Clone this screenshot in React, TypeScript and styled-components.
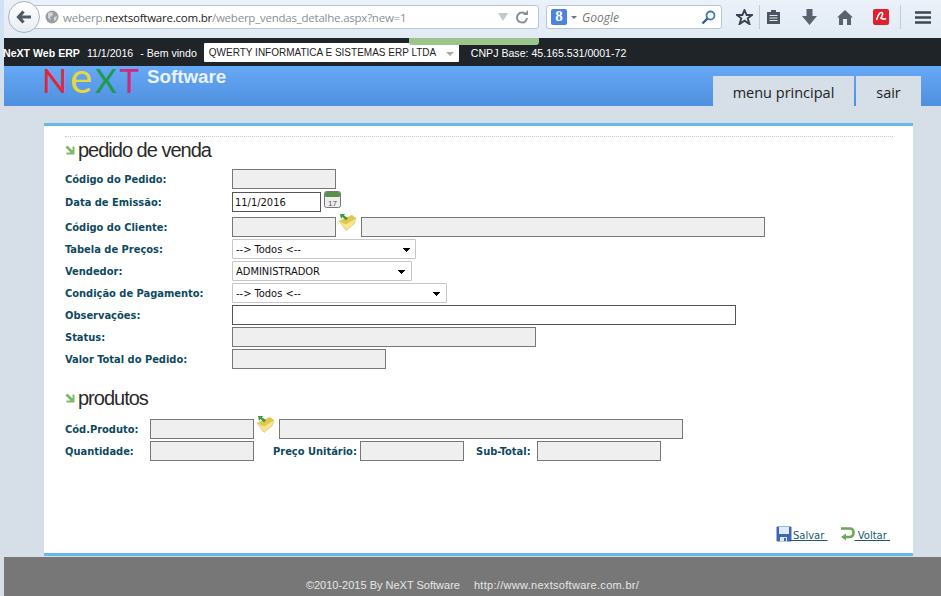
import React from 'react';
import styled, { createGlobalStyle } from 'styled-components';

const GlobalStyle = createGlobalStyle`
  html, body { margin: 0; padding: 0; height: 100%; overflow: hidden; }
  body { background: #d6dee8; font-family: "Liberation Sans", Arial, sans-serif; }
  * { box-sizing: border-box; }
`;

const FORM_FONT = '"DejaVu Sans Condensed", "DejaVu Sans", Verdana, sans-serif';

// --- browser chrome ---
const Screen = styled.div`
  width: 941px;
  height: 596px;
  display: flex;
  flex-direction: column;
  overflow: hidden;
  background: linear-gradient(#cfe3f6, #d6dee8 110px);
`;

const Toolbar = styled.div`
  height: 38px;
  flex: none;
  display: flex;
  align-items: center;
  margin-left: 4px;
  padding: 0 0 4px 4px;
  background: linear-gradient(#eaf1f9, #e2eaf4);
`;

const BackButton = styled.div`
  width: 32px;
  height: 32px;
  flex: none;
  border-radius: 50%;
  border: 1px solid #a9b3bf;
  background: linear-gradient(#ffffff, #e8edf3);
  display: flex;
  align-items: center;
  justify-content: center;
  position: relative;
  z-index: 1;
`;

const UrlBar = styled.div`
  width: 509px;
  height: 24px;
  margin-left: -10px;
  padding: 0 8px 0 14px;
  flex: none;
  display: flex;
  align-items: center;
  background: #fff;
  border: 1px solid #b9c5d3;
  border-radius: 0 3px 3px 0;
`;

const UrlText = styled.div`
  flex: 1;
  margin-left: 4px;
  font-family: "Open Sans", "Noto Sans", sans-serif;
  font-size: 11.5px;
  letter-spacing: -0.23px;
  color: #8a8f94;
  white-space: nowrap;
  b { font-weight: 400; color: #1c1c1c; }
`;

const SearchBar = styled.div`
  width: 176px;
  height: 24px;
  margin-left: 7px;
  padding: 0 5px 0 4px;
  flex: none;
  display: flex;
  align-items: center;
  background: #fff;
  border: 1px solid #b9c5d3;
  border-radius: 3px;
`;

const GoogleBox = styled.div`
  width: 16px;
  height: 16px;
  border-radius: 2px;
  background: #4a84e0;
  color: #fff;
  font-family: "Liberation Serif", serif;
  font-weight: 700;
  font-size: 15px;
  line-height: 14px;
  text-align: center;
`;

const SearchCaret = styled.div`
  margin-left: 4px;
  border: 3px solid transparent;
  border-top: 3px solid #6d7276;
  border-bottom: 0;
`;

const SearchHint = styled.div`
  flex: 1;
  margin-left: 5px;
  font-family: "Open Sans", sans-serif;
  font-style: italic;
  font-size: 12px;
  color: #777;
`;

const IconRow = styled.div`
  display: flex;
  align-items: center;
  margin-left: 7px;
`;

const ToolIcon = styled.div<{ $w: number; $sep?: boolean; $pl?: number }>`
  width: ${({ $w }) => $w}px;
  height: 24px;
  padding-left: ${({ $pl }) => $pl ?? 0}px;
  display: flex;
  align-items: center;
  justify-content: center;
  flex: none;
  border-left: ${({ $sep }) => ($sep ? '1px solid #c4ccd6' : '0')};
`;

// --- page header ---
const Page = styled.div`
  flex: 1;
  display: flex;
  flex-direction: column;
  margin-left: 4px;
  min-height: 0;
`;

const TopBar = styled.div`
  height: 28px;
  flex: none;
  display: flex;
  align-items: center;
  padding-top: 1px;
  position: relative;
  background: #1f2428;
  color: #fff;
  font-size: 10.6px;
  white-space: nowrap;
`;

const LoadBar = styled.div`
  position: absolute;
  left: 405px;
  top: 0;
  width: 130px;
  height: 7px;
  background: #9cc58c;
  border-radius: 0 0 3px 3px;
`;

const BrandName = styled.b`
  margin-left: -1px;
`;

const TopDate = styled.span`
  margin-left: 7px;
`;

const TopWelcome = styled.span`
  margin-left: 7px;
`;

const CompanySelect = styled.div`
  width: 255px;
  height: 19px;
  margin-left: 7px;
  padding: 0 5px 0 5px;
  display: flex;
  align-items: center;
  justify-content: space-between;
  background: #fff;
  color: #222;
  border-radius: 1px;
  font-size: 10px;
`;

const GreyCaret = styled.div`
  border: 4px solid transparent;
  border-top: 4px solid #aaa;
  border-bottom: 0;
  margin-top: 2px;
`;

const Cnpj = styled.span`
  margin-left: 12px;
`;

const HeaderBand = styled.div`
  height: 40px;
  flex: none;
  display: flex;
  justify-content: space-between;
  padding: 0 20px 0 38px;
  background: linear-gradient(#66a9f6, #4f8fdf);
`;

const Logo = styled.div`
  display: flex;
  align-items: flex-start;
  height: 26px;
`;

const LogoMark = styled.div`
  display: flex;
  height: 26px;
  margin-top: -3px;
  align-items: baseline;
  font-family: Lato, Roboto, sans-serif;
  line-height: 28px;
  width: 97px;
  justify-content: space-between;
`;

const LogoLetter = styled.span<{ $c: string; $s: number }>`
  color: ${({ $c }) => $c};
  font-size: ${({ $s }) => $s}px;
  font-weight: 400;
`;

const LogoSoft = styled.div`
  margin-left: 8px;
  font-size: 18.8px;
  line-height: 22px;
  font-weight: 700;
  color: #e8f3ff;
`;

const Tabs = styled.div`
  display: flex;
  align-self: flex-end;
  gap: 2px;
  height: 30px;
`;

const Tab = styled.div<{ $w: number }>`
  width: ${({ $w }) => $w}px;
  height: 31px;
  background: #d6dee8;
  color: #222;
  font-family: "Open Sans", sans-serif;
  font-size: 14.5px;
  text-align: center;
  line-height: 33px;
`;

// --- panel ---
const Body = styled.div`
  flex: 1;
  padding: 17px 28px 1px 40px;
  min-height: 0;
`;

const Panel = styled.div`
  height: 433px;
  display: flex;
  flex-direction: column;
  padding: 10px 20px 0 21px;
  background: #fff;
  border-top: 3px solid #66baea;
  border-bottom: 3px solid #66baea;
`;

const Dotted = styled.div`
  border-top: 1px dotted #c8c8c8;
  height: 0;
  flex: none;
`;

const SectionTitle = styled.h2`
  display: flex;
  align-items: center;
  gap: 3px;
  margin: 0;
  height: 26px;
  font-family: "Liberation Sans", sans-serif;
  font-weight: 400;
  font-size: 20px;
  letter-spacing: -1px;
  color: #2a2a2a;
`;

const FormRows = styled.div`
  display: flex;
  flex-direction: column;
  margin-top: 5px;
`;

const Row = styled.div`
  height: 22px;
  display: flex;
  align-items: center;
`;

const DateRow = styled(Row)`
  margin: 1px 0 3px;
`;

const Label = styled.label<{ $w?: number; $ml?: number }>`
  width: ${({ $w }) => $w ?? 167}px;
  margin-left: ${({ $ml }) => $ml ?? 0}px;
  flex: none;
  font-family: ${FORM_FONT};
  font-stretch: condensed;
  font-weight: 700;
  font-size: 11px;
  color: #0e4a5e;
  white-space: nowrap;
`;

const Field = styled.input<{ $w: number; $ro?: boolean; $ml?: number }>`
  width: ${({ $w }) => $w}px;
  height: 20px;
  margin: 0 0 0 ${({ $ml }) => $ml ?? 0}px;
  padding: 1px 2px;
  flex: none;
  border: 1px solid ${({ $ro }) => ($ro ? '#777' : '#555')};
  border-radius: 0;
  background: ${({ $ro }) => ($ro ? '#efefef' : '#fff')};
  font-family: ${FORM_FONT};
  font-stretch: condensed;
  font-size: 11px;
  color: #111;
  outline: none;
`;

const Select = styled.select<{ $w: number }>`
  appearance: none;
  width: ${({ $w }) => $w}px;
  height: 20px;
  margin: 0;
  padding: 0 3px;
  flex: none;
  border: 1px solid #c6c6c6;
  border-radius: 1px;
  color: #111;
  font-family: ${FORM_FONT};
  font-stretch: condensed;
  font-size: 11px;
  background-color: #fff;
  background-image:
    linear-gradient(45deg, transparent 50%, #000 50%),
    linear-gradient(-45deg, transparent 50%, #000 50%);
  background-repeat: no-repeat;
  background-size: 4px 4px, 4px 4px;
  background-position: right 9px top 8px, right 5px top 8px;
`;

const IconButton = styled.span`
  display: flex;
  flex: none;
  width: 25px;
  height: 20px;
  margin-top: -8px;
  padding-left: 2px;
`;

const CalendarButton = styled.span`
  display: flex;
  flex: none;
  margin: -5px 0 0 3px;
`;

const ProductsTitle = styled(SectionTitle)`
  margin-top: 15px;
`;

const ProductRows = styled(FormRows)`
  margin-top: 7px;
`;

const Actions = styled.div`
  margin-top: auto;
  margin-bottom: 11px;
  display: flex;
  justify-content: flex-end;
  align-items: flex-end;
  gap: 12px;
  padding-right: 3px;
`;

const ActionLink = styled.a`
  display: flex;
  align-items: flex-end;
  font-family: "DejaVu Sans", Verdana, sans-serif;
  font-size: 10px;
  line-height: 12px;
  color: #1b5a70;
  text-decoration: underline;
  white-space: pre;
  cursor: pointer;
`;

const FloppySvg = styled.svg`
  margin-right: -2px;
`;

const Footer = styled.div`
  height: 39px;
  flex: none;
  display: flex;
  justify-content: center;
  gap: 14px;
  padding-top: 22px;
  background: #777;
  color: #e6e6e6;
  font-size: 11px;
  line-height: 13px;
`;

const FooterUrl = styled.span`
  letter-spacing: 0.3px;
`;

// --- drawings ---
const Arrow = () => (
  <svg width="10" height="10" viewBox="0 0 10 10">
    <path d="M9.5 1.5V9.5H1.5V7.5H5.5L0.5 2.5L2.5 .5L7.5 5.5V1.5Z" fill="#7dbb6a" />
  </svg>
);

const Folder = () => (
  <svg width="19" height="19" viewBox="0 0 19 19">
    <path d="M1 8L7 5L14 2L18 5L8 12Z" fill="#e3c650" />
    <path d="M1 8L8 11L18 5L16 11L8 17.5Z" fill="#f6e58c" stroke="#d8bd55" strokeWidth=".6" />
    <path d="M2 1H7L6 2.5L10 5L8 7.5L4.5 4L3 6Z" fill="#3f9a3c" />
  </svg>
);

const Calendar = () => (
  <svg width="17" height="17" viewBox="0 0 17 17">
    <rect x=".5" y=".5" width="16" height="16" rx="2" fill="#eee" stroke="#777" />
    <rect x="1" y="1" width="15" height="5" rx="1.5" fill="#5d8f4c" />
    <text x="8.5" y="14.5" fontSize="8" textAnchor="middle" fontFamily="Liberation Sans" fill="#555">17</text>
  </svg>
);

const FloppyIcon = () => (
  <FloppySvg width="16" height="16" viewBox="0 0 16 16">
    <rect x=".5" y=".5" width="15" height="15" rx="1" fill="#3f66b5" />
    <rect x="3" y="1" width="10" height="7" fill="#dfe9f7" />
    <rect x="4" y="11" width="7" height="4.5" fill="#dfe6ef" />
    <rect x="8" y="12" width="2" height="3" fill="#3f66b5" />
  </FloppySvg>
);

const ReturnIcon = () => (
  <svg width="15" height="15" viewBox="0 0 15 15">
    <path d="M1 1.5H10Q13.5 1.5 13.5 5.5T10 10H5" fill="none" stroke="#6aa85a" strokeWidth="2.6" />
    <path d="M6 6.5V13.5L1 10Z" fill="#6aa85a" />
  </svg>
);

const App = () => (
  <>
    <GlobalStyle />
    <Screen>
      <Toolbar>
        <BackButton>
          <svg width="16" height="14" viewBox="0 0 16 14">
            <path d="M7.5 1.5L2.5 7L7.5 12.5M3 7H15" fill="none" stroke="#4f5a64" strokeWidth="3.2" />
          </svg>
        </BackButton>
        <UrlBar>
          <svg width="14" height="14" viewBox="0 0 14 14">
            <circle cx="7" cy="7" r="6.5" fill="#9a9ea3" />
            <path d="M3 3L7 2L8 5L5 7L6 10L3 8ZM9 7L12 6L11 10L9 11Z" fill="#d4d6d9" />
          </svg>
          <UrlText>
            weberp.<b>nextsoftware.com.br</b>/weberp_vendas_detalhe.aspx?new=1
          </UrlText>
          <svg width="10" height="8" viewBox="0 0 10 8">
            <path d="M0 0H10L5 8Z" fill="#c3c8cd" />
          </svg>
          <svg width="16" height="14" viewBox="0 0 14 14" style={{ marginLeft: 6 }}>
            <path d="M11 4.5A5 5 0 1 0 12 8" fill="none" stroke="#8a9098" strokeWidth="2" />
            <path d="M8 5H13V0Z" fill="#8a9098" />
          </svg>
        </UrlBar>
        <SearchBar>
          <GoogleBox>8</GoogleBox>
          <SearchCaret />
          <SearchHint>Google</SearchHint>
          <svg width="15" height="15" viewBox="0 0 15 15">
            <circle cx="9.5" cy="5.5" r="4" fill="none" stroke="#3f7ab8" strokeWidth="1.8" />
            <path d="M6.5 8.5L1.5 13.5" stroke="#2e5f94" strokeWidth="2.4" />
          </svg>
        </SearchBar>
        <IconRow>
          <ToolIcon $w={30}>
            <svg width="17" height="16" viewBox="0 0 17 16">
              <path d="M8.5 1L10.6 6H16L11.7 9.3L13.4 15L8.5 11.6L3.6 15L5.3 9.3L1 6H6.4Z" fill="none" stroke="#38424c" strokeWidth="1.9" />
            </svg>
          </ToolIcon>
          <ToolIcon $w={28} $sep>
            <svg width="15" height="16" viewBox="0 0 15 16">
              <path d="M1 3H5V1H10V3H14V15H1Z" fill="#4a5560" />
              <path d="M3.5 6.5H11.5M3.5 9H11.5M3.5 11.5H11.5" stroke="#dfe6ee" />
            </svg>
          </ToolIcon>
          <ToolIcon $w={44}>
            <svg width="15" height="16" viewBox="0 0 15 16">
              <path d="M4.5 0H10.5V7H15L7.5 16L0 7H4.5Z" fill="#59636d" />
            </svg>
          </ToolIcon>
          <ToolIcon $w={28}>
            <svg width="16" height="15" viewBox="0 0 16 15">
              <path d="M8 0L16 7.5H14V15H10V9H6V15H2V7.5H0Z" fill="#59636d" />
            </svg>
          </ToolIcon>
          <ToolIcon $w={41} $pl={3}>
            <svg width="16" height="16" viewBox="0 0 16 16">
              <rect width="16" height="16" rx="2" fill="#e0202c" />
              <path d="M3.5 11Q6 3 8.5 3.5T8 9Q11 11 13 9.5" fill="none" stroke="#fff" strokeWidth="1.6" />
            </svg>
          </ToolIcon>
          <ToolIcon $w={41} $sep $pl={3}>
            <svg width="16" height="13" viewBox="0 0 16 13">
              <path d="M0 1.5H16M0 6.5H16M0 11.5H16" stroke="#3f4850" strokeWidth="2.4" />
            </svg>
          </ToolIcon>
        </IconRow>
      </Toolbar>
      <Page>
        <TopBar>
          <LoadBar />
          <BrandName>NeXT Web ERP</BrandName>
          <TopDate>11/1/2016</TopDate>
          <TopWelcome>- Bem vindo</TopWelcome>
          <CompanySelect>
            QWERTY INFORMATICA E SISTEMAS ERP LTDA
            <GreyCaret />
          </CompanySelect>
          <Cnpj>CNPJ Base: 45.165.531/0001-72</Cnpj>
        </TopBar>
        <HeaderBand>
          <Logo>
            <LogoMark>
              <LogoLetter $c="#e0283c" $s={33}>N</LogoLetter>
              <LogoLetter $c="#e6d83a" $s={42}>e</LogoLetter>
              <LogoLetter $c="#1f9a4a" $s={33}>X</LogoLetter>
              <LogoLetter $c="#d02a7c" $s={33}>T</LogoLetter>
            </LogoMark>
            <LogoSoft>Software</LogoSoft>
          </Logo>
          <Tabs>
            <Tab $w={141}>menu principal</Tab>
            <Tab $w={65}>sair</Tab>
          </Tabs>
        </HeaderBand>
        <Body>
          <Panel>
            <Dotted />
            <SectionTitle>
              <Arrow />
              pedido de venda
            </SectionTitle>
            <FormRows>
              <Row>
                <Label>Código do Pedido:</Label>
                <Field $w={104} $ro readOnly />
              </Row>
              <DateRow>
                <Label>Data de Emissão:</Label>
                <Field $w={89} defaultValue="11/1/2016" />
                <CalendarButton><Calendar /></CalendarButton>
              </DateRow>
              <Row>
                <Label>Código do Cliente:</Label>
                <Field $w={104} $ro readOnly />
                <IconButton><Folder /></IconButton>
                <Field $w={404} $ro readOnly />
              </Row>
              <Row>
                <Label>Tabela de Preços:</Label>
                <Select $w={184}><option>--&gt; Todos &lt;--</option></Select>
              </Row>
              <Row>
                <Label>Vendedor:</Label>
                <Select $w={180}><option>ADMINISTRADOR</option></Select>
              </Row>
              <Row>
                <Label>Condição de Pagamento:</Label>
                <Select $w={215}><option>--&gt; Todos &lt;--</option></Select>
              </Row>
              <Row>
                <Label>Observações:</Label>
                <Field $w={504} />
              </Row>
              <Row>
                <Label>Status:</Label>
                <Field $w={304} $ro readOnly />
              </Row>
              <Row>
                <Label>Valor Total do Pedido:</Label>
                <Field $w={154} $ro readOnly />
              </Row>
            </FormRows>
            <ProductsTitle>
              <Arrow />
              produtos
            </ProductsTitle>
            <ProductRows>
              <Row>
                <Label $w={85}>Cód.Produto:</Label>
                <Field $w={104} $ro readOnly />
                <IconButton><Folder /></IconButton>
                <Field $w={404} $ro readOnly />
              </Row>
              <Row>
                <Label $w={85}>Quantidade:</Label>
                <Field $w={104} $ro readOnly />
                <Label $w={87} $ml={19}>Preço Unitário:</Label>
                <Field $w={104} $ro readOnly />
                <Label $w={61} $ml={12}>Sub-Total:</Label>
                <Field $w={124} $ro readOnly />
              </Row>
            </ProductRows>
            <Actions>
              <ActionLink><FloppyIcon /> Salvar </ActionLink>
              <ActionLink><ReturnIcon /> Voltar </ActionLink>
            </Actions>
          </Panel>
        </Body>
        <Footer>
          <span>©2010-2015 By NeXT Software</span>
          <FooterUrl>http://www.nextsoftware.com.br/</FooterUrl>
        </Footer>
      </Page>
    </Screen>
  </>
);

export default App;
